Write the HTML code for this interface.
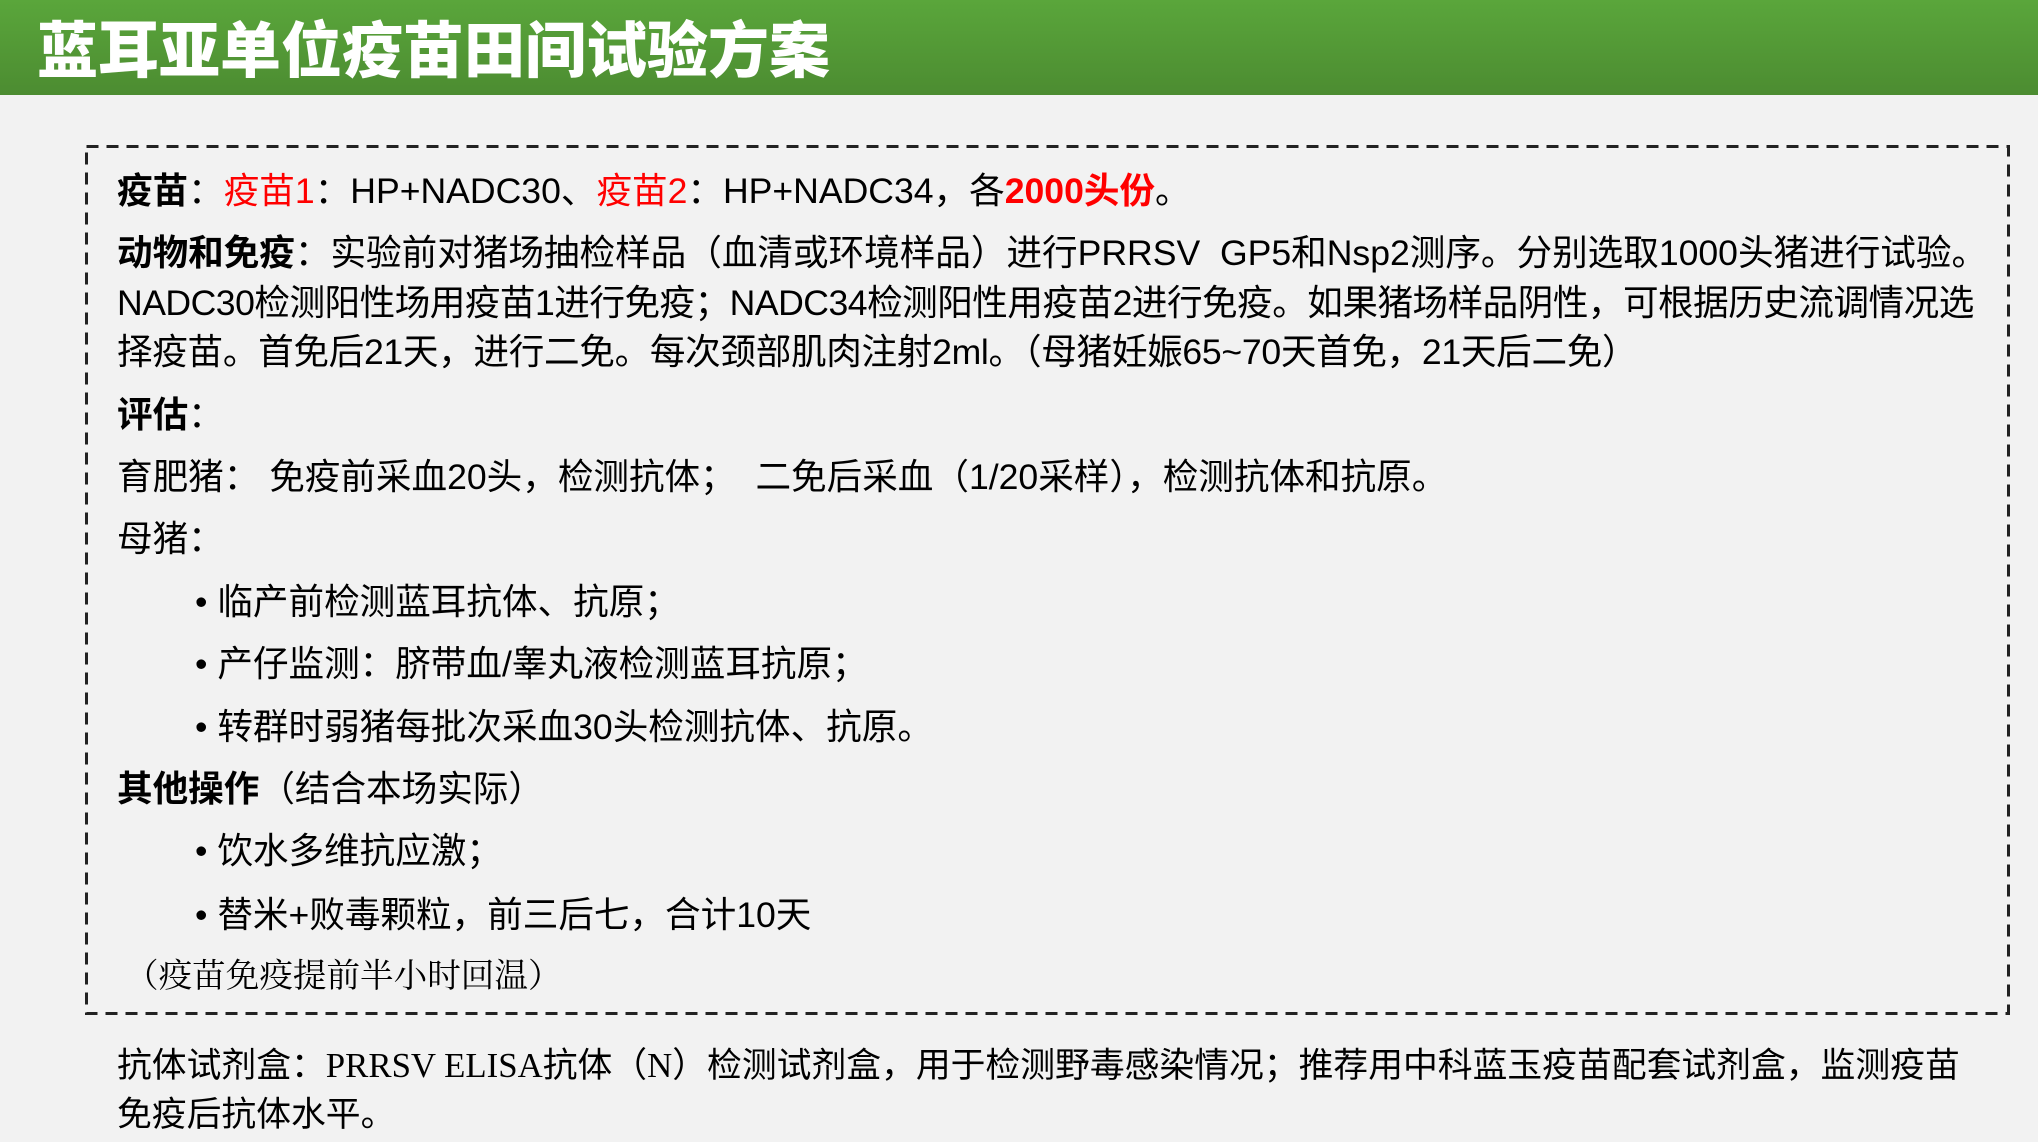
<!DOCTYPE html>
<html><head><meta charset="utf-8"><style>
html,body{margin:0;padding:0}
body{width:2038px;height:1142px;background:#f2f2f2;position:relative;overflow:hidden;font-family:"Liberation Sans","Noto Sans CJK SC",sans-serif;color:#000}
.hd{position:absolute;left:0;top:0;width:2038px;height:95px;background:linear-gradient(#5aa63b,#4c8c31)}
.tt{position:absolute;left:37px;top:6px;font-size:61px;line-height:80px;font-weight:900;color:#fff;white-space:nowrap;font-family:"Noto Sans CJK SC",sans-serif}
.box{position:absolute;left:85px;top:145px}
.l{position:absolute;left:117px;white-space:nowrap;font-size:35.6px;line-height:50px;height:50px}
.b{font-weight:bold}
.r{color:#f00}
.i{left:195px}
.s{font-family:"Liberation Serif","Noto Serif CJK SC",serif}
</style></head><body>
<div class="hd"></div>
<div class="tt">蓝耳亚单位疫苗田间试验方案</div>
<svg class="box" width="1926" height="872"><rect x="1.5" y="1.5" width="1922" height="867" fill="none" stroke="#222" stroke-width="3" stroke-dasharray="12 8"/></svg>
<div class="l" style="top:166px"><span class="b">疫苗</span>：<span class="r">疫苗1</span>：HP+NADC30、<span class="r">疫苗2</span>：HP+NADC34，各<span class="r b">2000头份</span>。</div>
<div class="l" style="top:228px"><span class="b">动物和免疫</span>：实验前对猪场抽检样品（血清或环境样品）进行PRRSV&nbsp; GP5和Nsp2测序。分别选取1000头猪进行试验。</div>
<div class="l" style="top:278px;letter-spacing:-0.5px">NADC30检测阳性场用疫苗1进行免疫；NADC34检测阳性用疫苗2进行免疫。如果猪场样品阴性，可根据历史流调情况选</div>
<div class="l" style="top:327px;letter-spacing:-0.3px">择疫苗。首免后21天，进行二免。每次颈部肌肉注射2ml。（母猪妊娠65~70天首免，21天后二免）</div>
<div class="l" style="top:390px"><span class="b">评估</span>：</div>
<div class="l" style="top:452px">育肥猪： 免疫前采血20头，检测抗体；&nbsp; 二免后采血（1/20采样），检测抗体和抗原。</div>
<div class="l" style="top:514px">母猪：</div>
<div class="l i" style="top:577px">• 临产前检测蓝耳抗体、抗原；</div>
<div class="l i" style="top:639px">• 产仔监测：脐带血/睾丸液检测蓝耳抗原；</div>
<div class="l i" style="top:702px">• 转群时弱猪每批次采血30头检测抗体、抗原。</div>
<div class="l" style="top:764px"><span class="b">其他操作</span>（结合本场实际）</div>
<div class="l i" style="top:826px">• 饮水多维抗应激；</div>
<div class="l i" style="top:890px">• 替米+败毒颗粒，前三后七，合计10天</div>
<div class="l s" style="top:952px;left:125px;font-size:33.6px">（疫苗免疫提前半小时回温）</div>
<div class="l" style="top:1041px;font-size:34.8px">抗体试剂盒：<span class="s">PRRSV ELISA</span>抗体（<span class="s">N</span>）检测试剂盒，用于检测野毒感染情况；推荐用中科蓝玉疫苗配套试剂盒，监测疫苗</div>
<div class="l" style="top:1090px;font-size:34.8px">免疫后抗体水平。</div>
</body></html>
